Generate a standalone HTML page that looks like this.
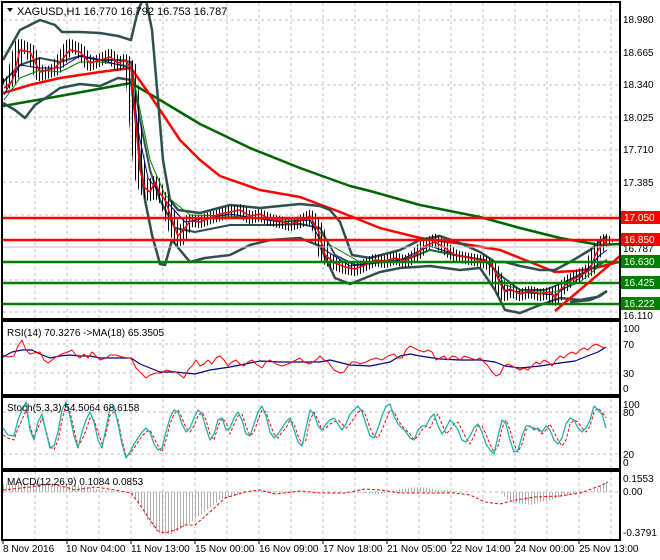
<!DOCTYPE html>
<html><head><meta charset="utf-8"><style>
body{margin:0;background:#fff;width:660px;height:560px;overflow:hidden}
svg{display:block;font-family:"Liberation Sans",sans-serif}
</style></head><body>
<svg width="660" height="560" viewBox="0 0 660 560" xmlns="http://www.w3.org/2000/svg">
<defs>
<pattern id="vb" width="3" height="10" patternUnits="userSpaceOnUse"><rect x="0" y="0" width="1" height="10" fill="#000"/></pattern>
<pattern id="hg" width="3" height="10" patternUnits="userSpaceOnUse"><rect x="0" y="0" width="1" height="10" fill="#b0b0b0"/></pattern>
<clipPath id="cm"><rect x="3" y="3" width="616" height="315"/></clipPath>
</defs>
<rect width="660" height="560" fill="#fff"/>
<g stroke="#c0c0c0" stroke-dasharray="3,3" stroke-width="1">
<path d="M35 3V540M67 3V540M99 3V540M131 3V540M163 3V540M195 3V540M227 3V540M259 3V540M291 3V540M323 3V540M355 3V540M387 3V540M419 3V540M451 3V540M483 3V540M515 3V540M547 3V540M579 3V540M611 3V540"/>
<path d="M3 20H619M3 52H619M3 85H619M3 117H619M3 150H619M3 182H619M3 215H619M3 247H619M3 280H619M3 312H619"/>
<path d="M3 344H619M3 373H619M3 412H619M3 454H619M3 492H619"/>
</g>
<g clip-path="url(#cm)" fill="none" stroke-linejoin="round">
<polyline stroke="#006400" stroke-width="2.5" points="3,106 60,96 131,83 160,100 200,124 250,148 300,168 350,186 370,191 420,205 480,217 520,228 560,238 600,245 619,244"/>
<polyline stroke="#ff0000" stroke-width="2.5" points="3,93 30,85 60,78 100,72 131,68 150,95 180,140 200,160 220,176 260,190 300,197 340,212 380,228 420,238 470,245 500,250 530,262 555,272 575,271 595,268 619,262"/>
<polyline stroke="#2f4f4f" stroke-width="2.5" points="3,60 20,30 40,20 55,25 62,32 80,32 100,33 118,36 131,40 138,10 145,-5 152,30 158,100 163,160 170,200 178,210 200,213 230,205 260,208 300,204 320,206 330,210 340,222 352,255 370,258 400,250 420,240 440,236 460,243 480,252 495,262 505,262 520,266 540,270 555,270 570,262 590,250 607,236"/>
<polyline stroke="#2f4f4f" stroke-width="2.5" points="3,103 15,110 25,118 35,105 50,95 60,88 80,84 100,86 118,78 131,80 138,140 145,200 152,235 160,264 165,265 172,240 180,250 190,262 205,258 230,255 250,245 270,240 300,238 320,246 335,278 350,284 380,272 400,268 430,266 460,270 480,268 495,290 505,310 520,313 540,305 560,298 580,300 597,297 607,291"/>
<polyline stroke="#2f4f4f" stroke-width="2" points="3,82 20,65 40,58 60,62 80,56 100,60 120,60 131,62 140,120 150,170 160,200 175,228 195,232 230,225 270,225 300,224 320,228 335,255 355,265 385,262 410,258 430,250 460,256 485,260 500,275 520,290 545,290 565,282 585,272 607,260"/>
<polyline stroke="url(#vb)" stroke-width="12" points="4,85 12,80 20,45 30,50 40,75 55,70 70,45 80,50 90,65 100,60 110,55 118,65 125,60 131,68 135,120 140,175 145,190 150,195 155,182 160,195 165,200 170,215 175,232 180,240 185,228 190,220 200,222 210,218 220,215 230,212 240,210 250,218 260,215 270,220 280,222 290,225 300,222 310,216 318,228 325,258 335,264 345,268 355,270 365,265 375,260 385,262 395,258 405,262 415,256 425,245 435,240 445,248 455,256 465,258 475,260 485,262 492,266 500,285 505,295 510,290 520,295 530,292 540,295 550,293 555,300 560,290 570,280 580,275 590,270 595,255 600,245 605,240 608,245"/>
<polyline stroke="#008000" stroke-width="1" points="4,100 20,78 40,70 60,72 80,62 100,62 131,66 140,110 150,160 165,195 190,215 230,216 280,220 310,220 330,245 360,262 400,260 430,250 460,256 490,262 505,285 530,292 555,292 580,282 607,260"/>
<polyline stroke="#000080" stroke-width="1" points="4,95 20,65 40,68 60,68 80,56 100,60 131,68 138,130 148,178 165,200 185,222 230,214 280,222 310,220 325,250 350,266 400,260 430,246 460,256 490,262 505,290 530,293 555,295 580,278 600,255 607,250"/>
<polyline stroke="#ff0000" stroke-width="1.5" points="4,88 12,82 20,50 30,52 40,72 55,68 70,50 80,52 90,63 100,60 110,57 118,63 125,60 131,68 135,115 140,170 145,188 150,192 155,182 160,193 165,200 170,214 178,236 185,228 190,221 200,222 210,218 220,214 230,212 240,210 250,216 260,214 270,219 280,221 290,224 300,221 310,216 318,230 325,255 335,263 345,267 355,269 365,265 375,260 385,261 395,258 405,261 415,255 425,246 435,242 445,248 455,255 465,257 475,259 485,261 492,265 500,283 505,292 510,289 520,294 530,291 540,294 550,292 555,298 560,290 570,281 580,276 590,270 595,256 600,247 605,242 608,245"/>
<path stroke="#ff0000" stroke-width="2.5" d="M3 218H619M3 240H619"/>
<path stroke="#008000" stroke-width="2.5" d="M3 262H619M3 283H619M3 304H619"/>
<path stroke="#c0c0c0" stroke-width="1" d="M3 247H619"/>
<polyline stroke="#ff0000" stroke-width="2.5" points="555,311 620,256"/>
<polyline stroke="#2f4f4f" stroke-width="2.5" points="570,302 590,300 600,296 607,291"/>
</g>
<g fill="none" stroke="#000" stroke-width="2">
<rect x="2" y="2" width="618" height="317"/>
<rect x="2" y="321" width="618" height="74"/>
<rect x="2" y="397" width="618" height="72"/>
<rect x="2" y="471" width="618" height="69"/>
</g>
<g fill="none" stroke-linejoin="round">
<polyline stroke="#000080" stroke-width="1.2" points="3,357 12,352 22,350 32,350 40,354 50,358 60,356 70,355 80,356 90,356 100,358 110,358 122,358 131,358 140,364 150,368 160,372 175,372 185,373 195,374 210,370 230,367 250,363 260,361 280,362 300,362 320,362 330,360 350,365 370,366 390,362 400,356 410,354 420,356 440,359 460,360 480,360 495,362 505,366 520,368 540,366 560,363 575,361 590,355 598,352 606,347"/>
<polyline stroke="#ff0000" stroke-width="1" points="3,355 8,357 14,356 18,346 22,340 26,350 30,354 34,353 40,352 44,360 48,363 52,360 56,357 62,354 68,352 72,350 76,355 80,358 84,354 88,358 92,352 96,356 100,360 106,358 110,355 116,355 122,357 128,358 131,358 136,368 142,374 146,378 150,375 156,373 162,373 166,370 170,371 176,372 180,375 184,378 188,370 192,366 196,360 200,366 204,364 208,360 212,364 216,358 220,356 224,360 228,366 232,362 236,360 240,364 244,366 248,362 252,360 256,364 262,368 266,362 270,360 276,364 282,366 288,364 294,361 300,358 304,362 310,364 316,360 320,356 324,360 328,362 334,370 340,373 344,372 348,366 352,362 356,362 360,364 366,362 370,360 376,358 382,360 388,356 394,354 398,358 402,358 406,350 410,346 414,348 418,350 424,352 428,350 432,352 436,360 440,358 444,356 448,360 452,356 456,357 460,360 464,356 470,358 476,360 480,358 484,362 488,366 492,372 496,376 500,374 504,366 508,364 512,366 516,368 520,370 524,368 528,370 532,366 536,362 540,364 544,360 548,362 552,366 556,360 560,356 564,358 568,354 572,352 576,354 580,350 584,348 588,350 592,346 596,344 600,346 604,348"/>
</g>
<g fill="none" stroke-linejoin="round">
<polyline stroke="#ff0000" stroke-width="1" stroke-dasharray="3,2" points="3,435 8,438 14,440 18,428 22,420 26,410 30,426 34,438 38,428 42,418 46,430 50,446 54,450 58,440 62,420 66,404 70,412 74,430 78,446 82,440 86,430 90,418 94,420 98,432 102,444 106,434 110,415 114,412 118,420 122,440 126,456 130,454 134,448 138,442 142,436 146,432 150,430 154,438 158,446 162,452 166,440 170,424 174,414 178,410 182,418 186,428 190,432 194,426 198,416 202,412 206,420 210,434 214,440 218,426 222,418 226,422 230,434 234,424 238,416 242,414 246,426 250,436 254,432 258,420 262,410 266,412 270,424 274,434 278,438 282,432 286,428 290,420 294,424 298,436 302,444 306,440 310,420 314,412 318,420 322,430 326,428 330,424 334,422 338,420 342,424 346,428 350,424 354,418 358,412 362,410 366,416 370,428 374,436 378,438 382,430 386,420 390,410 394,412 398,420 402,426 406,430 410,434 414,440 418,436 422,430 426,426 430,428 434,420 438,414 442,424 446,434 450,430 454,424 458,422 462,430 466,438 470,444 474,436 478,426 482,426 486,434 490,444 494,452 498,446 502,428 506,420 510,430 514,444 518,452 522,444 526,430 530,426 534,428 538,430 542,434 546,430 550,424 554,432 558,440 562,446 566,440 570,424 574,420 578,422 582,428 586,432 590,426 594,412 598,408 602,412 606,418"/>
<polyline stroke="#20b2aa" stroke-width="1.3" points="3,428 8,435 14,436 18,420 22,410 26,402 30,430 34,440 38,422 42,414 46,432 50,448 54,446 58,432 62,410 66,402 70,416 74,436 78,448 82,432 86,420 90,412 94,422 98,440 102,448 106,428 110,408 114,406 118,424 122,444 126,458 130,452 134,444 138,438 142,432 146,428 150,432 154,444 158,450 162,448 166,432 170,418 174,410 178,412 182,424 186,432 190,428 194,418 198,410 202,414 206,428 210,440 214,434 218,420 222,418 226,430 230,428 234,418 238,412 242,420 246,434 250,436 254,424 258,412 262,406 266,416 270,432 274,438 278,434 282,428 286,422 290,418 294,430 298,442 302,446 306,428 310,410 314,414 318,426 322,430 326,424 330,420 334,418 338,424 342,430 346,424 350,414 354,410 358,406 362,412 366,424 370,436 374,438 378,428 382,416 386,406 390,404 394,416 398,424 402,428 406,432 410,438 414,440 418,430 422,426 426,426 430,418 434,414 438,426 442,434 446,428 450,420 454,424 458,430 462,440 466,442 470,436 474,428 478,424 482,432 486,444 490,450 494,454 498,436 502,420 506,424 510,440 514,452 518,450 522,436 526,426 530,426 534,430 538,428 542,432 546,426 550,430 554,440 558,444 562,438 566,424 570,418 574,420 578,428 582,432 586,428 590,420 594,406 598,410 602,414 606,428"/>
</g>
<polygon fill="url(#hg)" points="3,492 3,484 40,483 60,487 80,485 100,490 131,492 140,505 150,525 160,534 170,535 180,530 200,515 220,500 245,493 260,490 300,492 340,492 380,494 400,489 420,487 440,490 470,492 500,492 510,502 530,505 550,500 570,495 590,492 600,487 608,480 608,492"/>
<polyline fill="none" stroke="#ff0000" stroke-width="1" stroke-dasharray="3,2" points="3,490 30,487 50,484 65,487 75,490 95,487 115,490 131,493 140,505 150,520 158,531 165,533 175,530 185,525 195,525 210,512 225,498 245,492 260,490 275,494 300,491 320,493 345,493 365,489 380,490 400,493 430,493 455,493 470,495 485,502 500,504 515,500 535,497 560,496 580,493 600,486 608,482"/>
<path d="M7 8h6l-3 4z" fill="#000"/>
<text x="17" y="15" font-size="11" fill="#000">XAGUSD,H1  16.770 16.792 16.753 16.787</text>
<text x="7" y="336" font-size="10" fill="#000">RSI(14) 70.3276  -&gt;MA(18) 65.3505</text>
<text x="7" y="411" font-size="10" fill="#000">Stoch(5,3,3) 54.5064 68.6158</text>
<text x="7" y="485" font-size="10" fill="#000">MACD(12,26,9) 0.1084 0.0853</text>
<g font-size="10" fill="#000">
<text x="623" y="23">18.980</text><text x="623" y="56">18.665</text><text x="623" y="88">18.340</text>
<text x="623" y="121">18.025</text><text x="623" y="153">17.710</text><text x="623" y="186">17.385</text>
<text x="623" y="319">16.110</text>
<text x="623" y="332">100</text><text x="623" y="348">70</text><text x="623" y="377">30</text><text x="623" y="392">0</text>
<text x="623" y="408">100</text><text x="623" y="416">80</text><text x="623" y="458">20</text><text x="623" y="466">0</text>
<text x="623" y="482">0.1553</text><text x="623" y="495">0.00</text><text x="623" y="536">-0.3791</text>
</g>
<rect x="621" y="211" width="39" height="13" fill="#ff0000"/><text x="624" y="221" font-size="10" fill="#fff">17.050</text>
<rect x="621" y="233" width="39" height="13" fill="#ff0000"/><text x="624" y="243" font-size="10" fill="#fff">16.850</text>
<rect x="621" y="246" width="39" height="6" fill="#fff"/><text x="623" y="252" font-size="10" fill="#000">16.787</text>
<rect x="621" y="255" width="39" height="13" fill="#008000"/><text x="624" y="265" font-size="10" fill="#fff">16.630</text>
<rect x="621" y="276" width="39" height="13" fill="#008000"/><text x="624" y="286" font-size="10" fill="#fff">16.425</text>
<rect x="621" y="297" width="39" height="13" fill="#008000"/><text x="624" y="307" font-size="10" fill="#fff">16.222</text>
<g stroke="#000" stroke-width="1"><path d="M3 540v4M67 540v4M131 540v4M195 540v4M259 540v4M323 540v4M387 540v4M451 540v4M515 540v4M579 540v4"/></g>
<g font-size="10" fill="#000">
<text x="3" y="552">8 Nov 2016</text><text x="66" y="552">10 Nov 04:00</text><text x="131" y="552">11 Nov 13:00</text>
<text x="195" y="552">15 Nov 00:00</text><text x="259" y="552">16 Nov 09:00</text><text x="323" y="552">17 Nov 18:00</text>
<text x="387" y="552">21 Nov 05:00</text><text x="451" y="552">22 Nov 14:00</text><text x="515" y="552">24 Nov 00:00</text>
<text x="579" y="552">25 Nov 13:00</text>
</g>
</svg>
</body></html>
